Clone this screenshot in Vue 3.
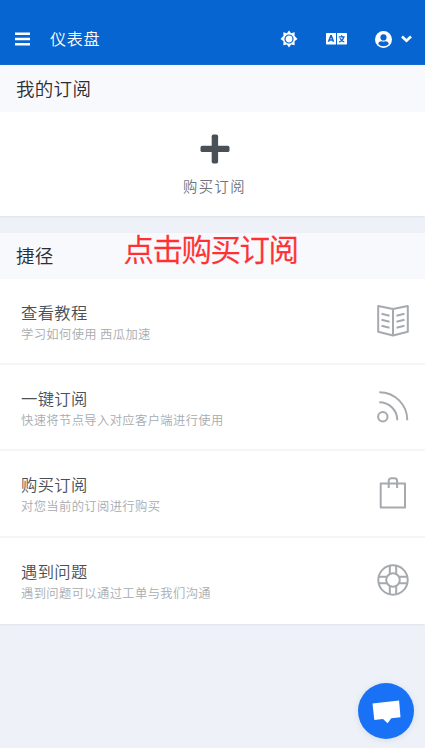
<script setup>
const shortcuts = [
  { icon: 'book', title: '查看教程', note: '学习如何使用 西瓜加速' },
  { icon: 'feed', title: '一键订阅', note: '快速将节点导入对应客户端进行使用' },
  { icon: 'bag', title: '购买订阅', note: '对您当前的订阅进行购买' },
  { icon: 'support', title: '遇到问题', note: '遇到问题可以通过工单与我们沟通' },
]
</script>

<template>
  <div class="page">
    <header class="topbar">
      <svg class="menu" width="15" height="14" viewBox="0 0 15 14" fill="none" stroke="currentColor" stroke-width="2.4">
        <path d="M0 1.700h15M0 7h15M0 12.300h15" />
      </svg>
      <span class="page-name">仪表盘</span>
      <svg class="sun" width="18" height="18" viewBox="0 0 18 18">
        <path fill="currentColor" d="M9 .5l2.100 2.700 3.600-1-.2 3.600L17.500 9l-3 2.300.2 4-3.600-.7L9 17.500l-2.100-2.900-3.600.7.200-4L.5 9l3-3.200-.2-3.600 3.600 1z" />
        <circle cx="9" cy="9" r="4" fill="none" stroke="#0665d0" stroke-width="1.200" />
      </svg>
      <svg class="lang" width="21" height="12" viewBox="0 0 21 12">
        <path fill="currentColor" d="M.7 0H10v11.500H.7a.7.7 0 0 1-.7-.7V.7C0 .3.300 0 .7 0zM11 0h9.300c.4 0 .7.300.7.700v10.100c0 .4-.3.700-.7.700H11z" />
        <path fill="none" stroke="#0665d0" stroke-width="1.500" d="M2.500 8.800L4.800 2.800h.5l2.200 6M3.500 7h3.200" />
        <path fill="none" stroke="#0665d0" stroke-width="1.300" d="M12.700 3.800h6M15.700 2.300v1.500M17.600 4.100c-.5 2.300-2 4.100-4.600 4.900M14 5.200c.8 1.800 2.200 3.100 4.300 3.800" />
      </svg>
      <svg class="user" width="17" height="17" viewBox="0 0 16 16">
        <circle cx="8" cy="8" r="8" fill="currentColor" />
        <circle cx="8" cy="6" r="2.900" fill="#0665d0" />
        <path fill="#0665d0" d="M3 12.200c.5-1.800 1.600-2.500 3-2.500.7.300 1.300.4 2 .4s1.300-.1 2-.4c1.400 0 2.500.7 3 2.500A6.500 6.500 0 0 1 8 14.300 6.500 6.500 0 0 1 3 12.200z" />
      </svg>
      <svg class="caret" width="11" height="8" viewBox="0 0 11 8" fill="none" stroke="currentColor" stroke-width="2.600">
        <path d="M1 1.500l4.500 4.300L10 1.500" />
      </svg>
    </header>

    <section class="block">
      <h3 class="block-head first">我的订阅</h3>
      <div class="buy">
        <svg width="30" height="30" viewBox="0 0 30 30" fill="#495057">
          <rect x="11.700" y=".5" width="6.400" height="29" rx="1.700" />
          <rect x=".5" y="11.700" width="29" height="6.400" rx="1.700" />
        </svg>
        <span>购买订阅</span>
      </div>
    </section>

    <section class="block">
      <h3 class="block-head second">捷径<span class="callout">点击购买订阅</span></h3>
      <ul class="list">
        <li v-for="item in shortcuts" :key="item.title" class="row">
          <div class="words">
            <div class="title">{{ item.title }}</div>
            <div class="note">{{ item.note }}</div>
          </div>
          <svg class="glyph" width="32" height="32" viewBox="0 0 32 32" fill="none" stroke="currentColor" stroke-width="2">
            <template v-if="item.icon === 'book'">
              <path stroke-linejoin="round" d="M16 4L1.200 1v25.700L16 30.500l14.800-3.800V1zM16 4v26.500" />
              <path d="M4.500 8.800l8 1.900M4.500 14.800l8 1.900M4.500 20.800l8 1.900M27.500 8.800l-8 1.900M27.500 14.800l-8 1.900M27.500 20.800l-8 1.900" />
            </template>
            <template v-else-if="item.icon === 'feed'">
              <circle cx="5.800" cy="25.700" r="4.700" />
              <path d="M2.300 1.200c15.500 0 28 12.500 28 28M2.300 11.200c10 0 18 8 18 18" />
            </template>
            <template v-else-if="item.icon === 'bag'">
              <path stroke-linejoin="round" d="M3.700 6.500h24.300v24H3.700z" />
              <path d="M11.700 11V4c0-1.700 1-2.700 2.700-2.700h3c1.700 0 2.700 1 2.700 2.700v7" />
            </template>
            <template v-else>
              <circle cx="16" cy="16" r="14.700" />
              <circle cx="16" cy="16" r="6.800" />
              <path d="M12.800 1.800V10M19.200 1.800V10M12.800 22v8.200M19.200 22v8.200M1.800 12.800H10M1.800 19.200H10M22 12.800h8.200M22 19.200h8.200" />
            </template>
          </svg>
        </li>
      </ul>
    </section>

    <button class="chat" aria-label="chat">
      <svg width="56" height="56" viewBox="0 0 56 56">
        <path fill="#fff" d="M14.500 20.400L41.100 17.600l1.400 16.700-9.200.9-3.700 5-4.600-4.100-8.700.8z" />
      </svg>
    </button>
  </div>
</template>

<style>
body {
  margin: 0;
  background: #eff3f9;
}
</style>

<style scoped>
.page {
  box-sizing: border-box;
  min-height: 748px;
  background: #eef2f8;
  font-family: "Noto Sans CJK SC", sans-serif;
  font-weight: 350;
}
.topbar {
  display: flex;
  align-items: center;
  box-sizing: border-box;
  height: 65px;
  padding: 13px 13px 0 15px;
  background: #0665d0;
  color: #fff;
}
.page-name {
  margin-top: -2px;
  margin-left: 20px;
  font-size: 16px;
  letter-spacing: 0.800px;
  line-height: 24px;
}
.sun { margin-left: auto; }
.lang { margin-left: 28px; }
.user { margin-left: 28px; }
.caret { margin-left: 9px; }
.block {
  margin-bottom: 17px;
  background: #fff;
  box-shadow: 0 1px 2px #dce3ec;
}
.block-head {
  position: relative;
  box-sizing: border-box;
  height: 47px;
  margin: 0;
  padding-left: 16px;
  background: #f8f9fd;
  color: #2b2e33;
  font-size: 18.500px;
  font-weight: 350;
  letter-spacing: 0.300px;
  line-height: 46px;
}
.second {
  height: 46px;
  line-height: 45px;
}
.callout {
  position: absolute;
  left: 123.500px;
  top: -7px;
  color: #ff3032;
  font-size: 30.500px;
  letter-spacing: -1.500px;
  white-space: nowrap;
  -webkit-text-stroke: 0.300px #ff3032;
}
.buy {
  display: flex;
  flex-direction: column;
  align-items: center;
  box-sizing: border-box;
  height: 104px;
  padding: 22px 0 0 4px;
  color: #6c757d;
}
.buy span {
  margin-top: 11px;
  font-size: 14.300px;
  letter-spacing: 1.500px;
  line-height: 22px;
}
.list {
  margin: 0;
  padding: 0;
  list-style: none;
}
.row {
  display: flex;
  align-items: center;
  justify-content: space-between;
  box-sizing: border-box;
  height: 86.200px;
  padding: 0 16px 0 21px;
  border-bottom: 2px solid #f4f5f7;
}
.row:last-child { border-bottom-color: #fff; }
.words { padding-top: 5px; }
.title {
  color: #495057;
  font-size: 16.300px;
  letter-spacing: 0.400px;
  line-height: 21px;
}
.note {
  color: #a8abaf;
  font-size: 12.300px;
  letter-spacing: 0.370px;
  line-height: 22px;
}
.glyph { color: #a6a9ad; }
.chat {
  position: fixed;
  right: 11px;
  bottom: 9px;
  width: 56px;
  height: 56px;
  padding: 0;
  border: 0;
  border-radius: 50%;
  background: #1972f5;
  box-shadow: 0 1px 7px rgba(30, 60, 110, 0.120);
}
.chat svg { display: block; }
</style>
